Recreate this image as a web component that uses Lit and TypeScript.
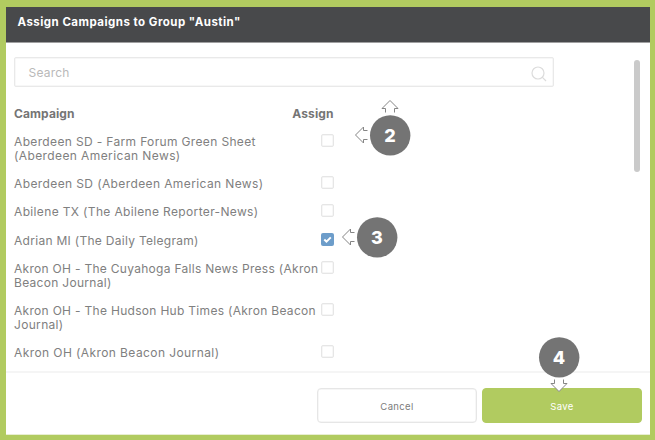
import { LitElement, html, css, svg } from "lit";
import { customElement, property } from "lit/decorators.js";

interface Line { text: string; spacing: number }
interface Campaign { lines: Line[]; assigned?: boolean }

const campaigns: Campaign[] = [
  { lines: [{ text: "Aberdeen SD - Farm Forum Green Sheet", spacing: 0.35 }, { text: "(Aberdeen American News)", spacing: 0.4 }] },
  { lines: [{ text: "Aberdeen SD (Aberdeen American News)", spacing: 0.39 }] },
  { lines: [{ text: "Abilene TX (The Abilene Reporter-News)", spacing: 0.35 }] },
  { lines: [{ text: "Adrian MI (The Daily Telegram)", spacing: 0.29 }], assigned: true },
  { lines: [{ text: "Akron OH - The Cuyahoga Falls News Press (Akron", spacing: 0.29 }, { text: "Beacon Journal)", spacing: 0.3 }] },
  { lines: [{ text: "Akron OH - The Hudson Hub Times (Akron Beacon", spacing: 0.3 }, { text: "Journal)", spacing: 0.32 }] },
  { lines: [{ text: "Akron OH (Akron Beacon Journal)", spacing: 0.41 }] },
];

@customElement("step-marker")
export class StepMarker extends LitElement {
  @property() label = "";
  @property({ attribute: false }) arrows: string[] = [];

  static styles = css`
    :host { display: block; width: 68px; height: 68px; }
    svg { display: block; overflow: visible; }
    .disc { fill: #747474; }
    .arrow { fill: #fff; stroke: #858585; stroke-width: 1; }
    .num { fill: #fff; font: 800 18px Inter, sans-serif; text-anchor: middle; }
  `;

  render() {
    const turn: Record<string, number> = { up: 0, down: 180, left: -90 };
    return html`<svg width="68" height="68" viewBox="-34 -34 68 68">
      ${this.arrows.map((a) => svg`<path class="arrow" transform="rotate(${turn[a]})"
        d="M-4.5 -22.5V-26.5H-8L0 -34.5L8 -26.5H4.5V-22.5" />`)}
      <circle class="disc" cx="0.2" cy="0.4" r="20.2" />
      <text class="num" y="6.5">${this.label}</text>
    </svg>`;
  }
}

@customElement("app-root")
export class AppRoot extends LitElement {
  static styles = css`
    :host {
      display: block; box-sizing: border-box; width: 655px; height: 440px;
      padding: 7px 5px 5px 6px; background: #b1cb60; position: relative;
      font-family: Inter, "Noto Sans", sans-serif; color: #808080; overflow: hidden;
    }
    * { box-sizing: border-box; }
    .dialog { display: flex; flex-direction: column; height: 428px; background: #fff; }
    .title {
      flex: none; height: 36px; padding: 0 11.5px; margin: 0; background: #48494b;
      border-bottom: 1px solid #a0a0a1; color: #fff;
      font-size: 11.5px; font-weight: 700; line-height: 31px; letter-spacing: 0.47px;
    }
    .body { flex: 1; min-height: 0; display: flex; justify-content: space-between; padding: 14px 10px 0 8px; }
    .search {
      display: flex; align-items: center; justify-content: space-between; width: 540px; height: 30px;
      padding: 0 6px 0 13.5px; border: 1px solid #e9e9e9; border-radius: 2px;
      box-shadow: inset 0 0 0 0.5px #f0f0f0;
      font-size: 12px; color: #b9b9b9; letter-spacing: 0.2px;
    }
    .search svg { fill: none; stroke: #dcdcdc; stroke-width: 1.2; margin-top: 3px; }
    .scroll { width: 6px; height: 112px; margin-top: 3px; border-radius: 3px; background: #cacaca; }
    .list { width: 320px; }
    .head {
      display: flex; justify-content: space-between; margin-top: 19px; height: 28px; padding-right: 0.5px;
      font-size: 12px; line-height: 15px; font-weight: 700; color: #757575; letter-spacing: 0.1px;
    }
    .row { display: flex; justify-content: space-between; margin-bottom: 14.1px; font-size: 12px; line-height: 14.1px; }
    .name { white-space: nowrap; width: 307px; padding-top: 1px; margin-bottom: -1px; }
    .line { display: block; }
    .box { flex: none; width: 13px; height: 13px; border: 1px solid #e6e6e6; border-radius: 2px; background: #fff; box-shadow: inset 0 0 0 0.5px #eee; }
    .box.on { border: 0; background: #6d9dca; box-shadow: none; }
    .box svg { display: block; fill: none; stroke: #fff; stroke-width: 2; }
    .footer {
      flex: none; display: flex; justify-content: flex-end; gap: 5px; height: 64px;
      padding: 15px 8px 0; border-top: 2px solid #f5f5f5; border-bottom: 1px solid #e8eed2;
    }
    .btn {
      width: 160px; height: 35px; border: 1px solid #e6e6e6; border-radius: 4px; background: #fff; padding: 2px 0 0;
      font: 9.5px Inter, sans-serif; letter-spacing: 0.35px; color: #7c7c7c;
      box-shadow: inset 0 0 0 0.5px #eee;
    }
    .btn.save { background: #b1cb60; border-color: #b1cb60; color: #fff; box-shadow: none; }
    step-marker { position: absolute; }
    .two { left: 356px; top: 101px; }
    .three { left: 342.6px; top: 203px; }
    .four { left: 524.6px; top: 323px; }
  `;

  render() {
    return html`
      <div class="dialog">
        <h1 class="title">Assign Campaigns to Group "Austin"</h1>
        <div class="body">
          <div>
            <div class="search"><span>Search</span>
              <svg width="16" height="16" viewBox="0 0 16 16"><circle cx="7" cy="7" r="6" /><path d="M11.2 11.2L15 15" /></svg>
            </div>
            <div class="list">
              <div class="head"><span>Campaign</span><span>Assign</span></div>
              ${campaigns.map((c) => html`<div class="row">
                <div class="name">${c.lines.map((l) => html`<span class="line" style="letter-spacing:${l.spacing}px">${l.text}</span>`)}</div>
                <div class="box ${c.assigned ? "on" : ""}">
                  ${c.assigned ? html`<svg width="13" height="13" viewBox="0 0 13 13"><path d="M3.3 6.5L5.5 8.7L9.8 4.4" /></svg>` : ""}
                </div>
              </div>`)}
            </div>
          </div>
          <div class="scroll"></div>
        </div>
        <div class="footer">
          <button class="btn">Cancel</button>
          <button class="btn save">Save</button>
        </div>
      </div>
      <step-marker class="two" label="2" .arrows=${["up", "left"]}></step-marker>
      <step-marker class="three" label="3" .arrows=${["left"]}></step-marker>
      <step-marker class="four" label="4" .arrows=${["down"]}></step-marker>
    `;
  }
}
